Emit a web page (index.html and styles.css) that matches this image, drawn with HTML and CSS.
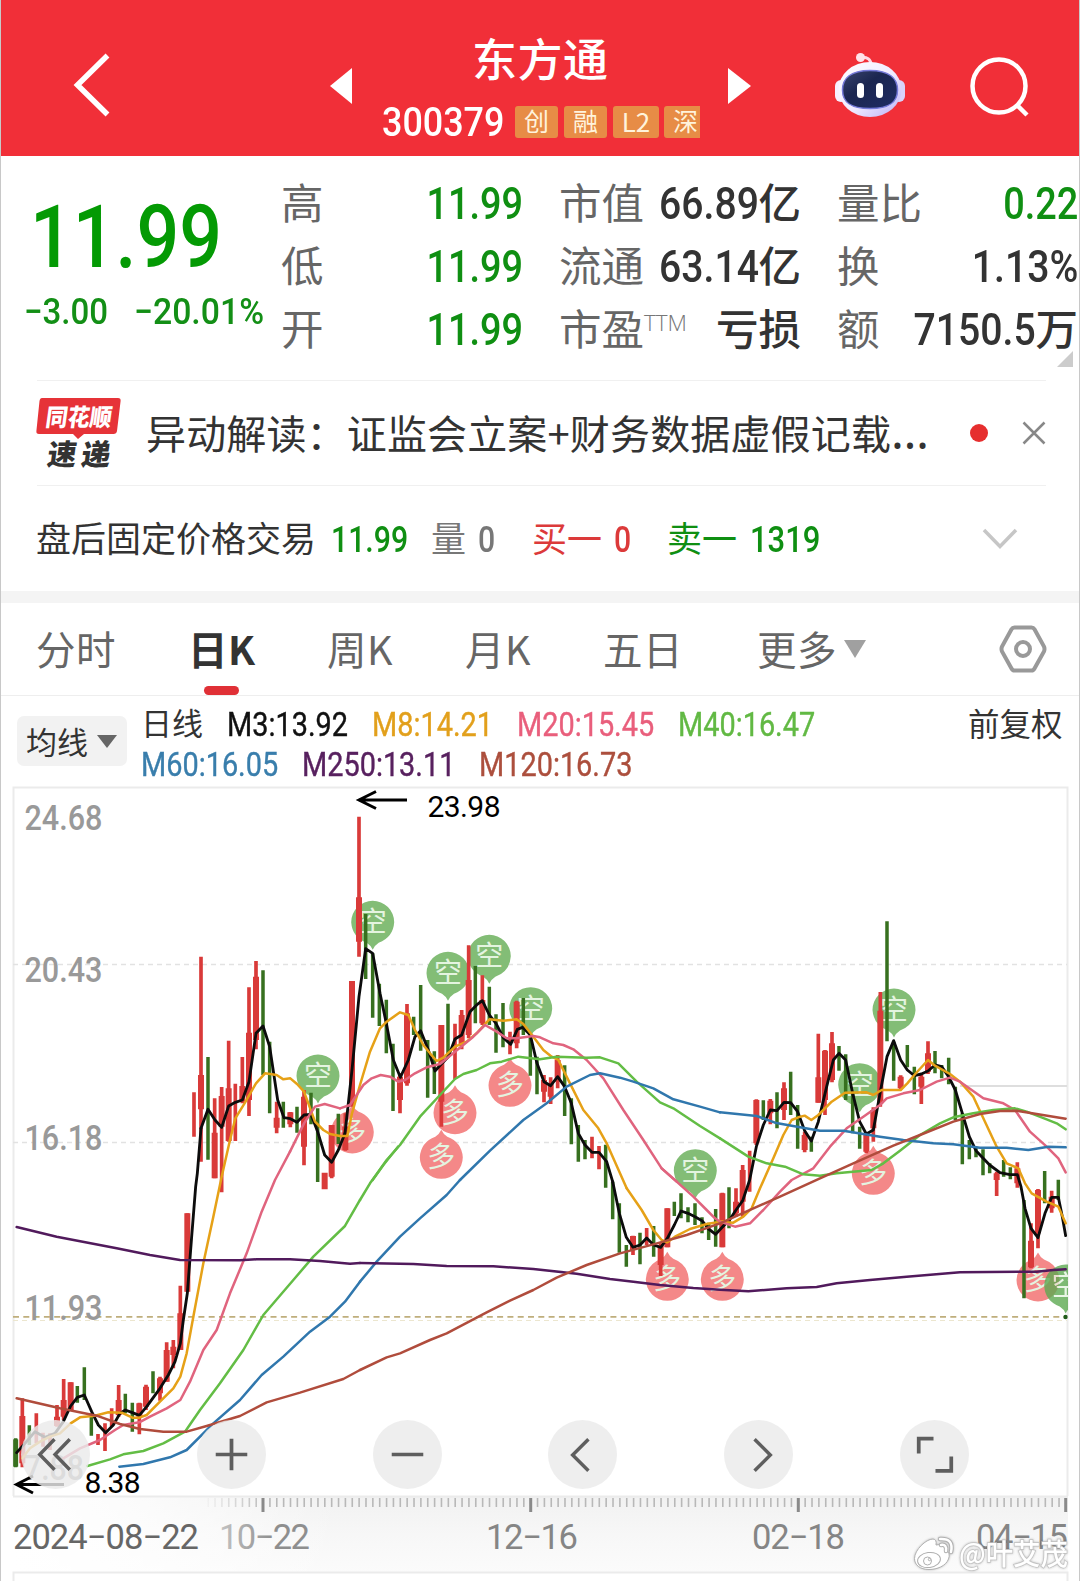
FILE: index.html
```html
<!DOCTYPE html>
<html lang="zh-CN">
<head>
<meta charset="utf-8">
<title>东方通 300379</title>
<link rel="stylesheet" href="styles.css">
</head>
<body>
<div class="app">
  <header class="top">
    <svg class="ic-back" width="40" height="70" viewBox="0 0 40 70"><path d="M35.5 5.500L5.500 35L35.500 64.500"/></svg>
    <svg class="ic-prev" width="22" height="36" viewBox="0 0 22 36"><path d="M22 0V36L0 18Z"/></svg>
    <div class="title">
      <h1>东方通</h1>
      <div class="codes"><span class="code"><b class="n">300379</b></span><i class="tag">创</i><i class="tag">融</i><i class="tag l2">L2</i><i class="tag cut">深</i></div>
    </div>
    <svg class="ic-next" width="23" height="36" viewBox="0 0 23 36"><path d="M0 0V36L23 18Z"/></svg>
    <svg class="ic-bot" width="72" height="68" viewBox="0 0 72 68">
      <defs>
        <linearGradient id="shell" x1="0" y1="0" x2="1" y2="1"><stop offset="0" stop-color="#fff"/><stop offset=".55" stop-color="#f0eaff"/><stop offset="1" stop-color="#b9aef5"/></linearGradient>
        <linearGradient id="visor" x1="0" y1="0" x2="1" y2="1"><stop offset="0" stop-color="#3a456f"/><stop offset=".4" stop-color="#1b2650"/><stop offset="1" stop-color="#202c63"/></linearGradient>
      </defs>
      <path d="M27 6.500Q36 5 37.500 14" fill="none" stroke="#ffd9e6" stroke-width="3"/>
      <circle cx="26.500" cy="6.500" r="4.500" fill="#ffe3ea"/>
      <rect x="1" y="29" width="12" height="22" rx="6" fill="#f7efff"/>
      <rect x="59" y="29" width="12" height="22" rx="6" fill="#d9d2fa"/>
      <ellipse cx="36" cy="38.500" rx="31.500" ry="27.500" fill="url(#shell)"/>
      <path d="M36 19.500C56 19.500 63.500 28 63.500 39C63.500 51 56 57.500 36 57.500C16 57.500 8.500 51 8.500 39C8.500 28 16 19.500 36 19.500Z" fill="url(#visor)" stroke="#7479d8" stroke-width="1.500"/>
      <rect x="23" y="32" width="7" height="15" rx="3.500" fill="#fff"/><rect x="42" y="32" width="7" height="15" rx="3.500" fill="#fff"/>
    </svg>
    <svg class="ic-search" width="62" height="62" viewBox="0 0 62 62"><circle cx="30" cy="30" r="26.500"/><path d="M48 49L58 59"/></svg>
  </header>

  <section class="quote">
    <div class="price">
      <div class="last"><b class="n">11.99</b></div>
      <div class="chg"><span><b class="n">−3.00</b></span><span><b class="n">−20.01%</b></span></div>
    </div>
    <div class="stats">
      <span class="k">高</span><span class="v g"><b class="n">11.99</b></span><span class="k">市值</span><span class="v"><b class="n m">66.89</b>亿</span><span class="k">量比</span><span class="v g"><b class="n s">0.22</b></span>
      <span class="k">低</span><span class="v g"><b class="n">11.99</b></span><span class="k">流通</span><span class="v"><b class="n m">63.14</b>亿</span><span class="k">换</span><span class="v"><b class="n m">1.13%</b></span>
      <span class="k">开</span><span class="v g"><b class="n">11.99</b></span><span class="k">市盈<sup>TTM</sup></span><span class="v">亏损</span><span class="k">额</span><span class="v"><b class="n m">7150.5</b>万</span>
    </div>
    <i class="corner"></i>
  </section>

  <section class="news">
    <svg class="logo" width="86" height="74" viewBox="0 0 86 74">
      <path d="M6 2H82Q85 2 84.600 5L81 35Q80.500 38 77.500 38H48L42 43L37 38H3Q0 38 .400 35L3.500 5Q4 2 6 2Z" fill="#e63338"/>
      <g transform="skewX(-8)" font-weight="900"><text x="13" y="30" font-size="24" fill="#fff" textLength="66" lengthAdjust="spacingAndGlyphs">同花顺</text>
      <text x="20" y="69" font-size="29" fill="#333" textLength="63" lengthAdjust="spacing">速递</text></g>
    </svg>
    <p class="headline">异动解读：证监会立案+财务数据虚假记载<span class="dots">…</span></p>
    <i class="dot"></i>
    <svg class="ic-x" width="24" height="24" viewBox="0 0 24 24"><path d="M1.500 1.500L22.500 22.500M22.500 1.500L1.500 22.500"/></svg>
  </section>

  <section class="after">
    <span class="w1">盘后固定价格交易</span><span class="w2 g"><b class="n">11.99</b></span><span class="w3 grey">量</span><span class="w4 grey"><b class="n">0</b></span><span class="w5 r">买一</span><span class="w6 r"><b class="n">0</b></span><span class="w7 g">卖一</span><span class="w8 g"><b class="n">1319</b></span>
    <svg class="ic-down" width="36" height="22" viewBox="0 0 36 22"><path d="M2 2L18 18.500L34 2"/></svg>
  </section>

  <nav class="tabs">
    <span class="t1">分时</span><span class="t2 on">日K</span><span class="t3">周K</span><span class="t4">月K</span><span class="t5">五日</span><span class="t6">更多<i class="caret"></i></span>
    <svg class="ic-hex" width="48" height="48" viewBox="0 0 48 48"><path d="M15.500 2.500H32.500Q34.500 2.500 35.500 4.200L45 21.500Q46 24 45 26.500L35.500 43.500Q34.500 45.500 32.500 45.500H15.500Q13.500 45.500 12.500 43.500L3 26.500Q2 24 3 21.500L12.500 4.200Q13.500 2.500 15.500 2.500Z"/><circle cx="24" cy="24" r="7"/></svg>
  </nav>

  <section class="legend">
    <div class="ma">均线<i></i></div>
    <div class="rows">
      <div class="row"><span class="d">日线</span><span class="l3"><b class="n">M3:13.92</b></span><span class="l8"><b class="n">M8:14.21</b></span><span class="l20"><b class="n">M20:15.45</b></span><span class="l40"><b class="n">M40:16.47</b></span></div>
      <div class="row"><span class="l60"><b class="n">M60:16.05</b></span><span class="l250"><b class="n">M250:13.11</b></span><span class="l120"><b class="n">M120:16.73</b></span></div>
    </div>
    <div class="adj">前复权</div>
  </section>

  <section class="chart">
    <svg class="plot" width="1080" height="801" viewBox="0 780 1080 801">
      <defs>
        <linearGradient id="ruler" x1="0" y1="0" x2="0" y2="1"><stop offset="0" stop-color="#f1f1f1"/><stop offset=".5" stop-color="#f7f7f7"/><stop offset="1" stop-color="#fbfbfb"/></linearGradient>
        <linearGradient id="fade" x1="0" y1="0" x2="1" y2="0"><stop offset="0" stop-color="#fff"/><stop offset=".35" stop-color="#fff" stop-opacity=".75"/><stop offset="1" stop-color="#fff" stop-opacity="0"/></linearGradient>
        <linearGradient id="date" x1="0" y1="0" x2="1" y2="0"><stop offset="0" stop-color="#c4c4c4"/><stop offset=".6" stop-color="#8e8e8e"/></linearGradient>
        <linearGradient id="tickfade" gradientUnits="userSpaceOnUse" x1="200" y1="0" x2="270" y2="0"><stop offset="0" stop-color="#b8b8b8" stop-opacity="0"/><stop offset="1" stop-color="#b8b8b8"/></linearGradient>
        <clipPath id="frame"><rect x="13" y="787" width="1055" height="709"/></clipPath>
        <g id="short"><path d="M-21.500 0A21.500 21.500 0 1 1 21.500 0Q20.500 15 6 20.500Q2 23 0 27.500Q-2 23 -6 20.500Q-20.500 15 -21.500 0Z"/><text class="glyph" y="10">空</text></g>
        <g id="long"><path d="M-21.500 0A21.500 21.500 0 0 0 21.500 0Q20.500 -15 6 -20.500Q2 -23 0 -27.500Q-2 -23 -6 -20.500Q-20.500 -15 -21.500 0Z"/><text class="glyph" y="10">多</text></g>
      </defs>
      <rect x="13" y="1496" width="1055" height="77" fill="url(#ruler)"/>
      <rect x="13" y="1496" width="330" height="77" fill="url(#fade)"/>
      <path class="frame" d="M13.500 1496V787.500H1067.500V1496M13 1496.500H1068M13.500 1581V1572.500H1067.500V1581"/>
      <path class="grid" d="M13 964.500H1067M13 1142.500H1067"/>
      <path class="hi" d="M960 1086H1067"/>
      <path class="warn" d="M13 1316.800H1067"/><path class="warn2" d="M13 1320.500H1067"/>

      <g class="scale">
        <text x="24.500" y="829.500" textLength="78" lengthAdjust="spacingAndGlyphs">24.68</text><text x="24.500" y="981.700" textLength="78" lengthAdjust="spacingAndGlyphs">20.43</text>
        <text x="24.500" y="1150.300" textLength="78" lengthAdjust="spacingAndGlyphs">16.18</text><text x="24.500" y="1320" textLength="78" lengthAdjust="spacingAndGlyphs">11.93</text>
        <text x="24" y="1479.500" textLength="60" lengthAdjust="spacingAndGlyphs">7.88</text>
      </g>

      <g class="mark" clip-path="url(#frame)">
        <g class="sg"><use href="#short" x="318" y="1076"/><use href="#short" x="372.700" y="922.300"/><use href="#short" x="448" y="973.300"/><use href="#short" x="489.300" y="956.300"/><use href="#short" x="530.700" y="1008.700"/><use href="#short" x="695.300" y="1170.700"/><use href="#short" x="859.700" y="1084.700"/><use href="#short" x="894" y="1010"/></g>
        <g class="lg"><use href="#long" x="352.300" y="1132"/><use href="#long" x="455" y="1112.700"/><use href="#long" x="441.300" y="1157.300"/><use href="#long" x="510" y="1085.300"/><use href="#long" x="667.300" y="1279.300"/><use href="#long" x="722.300" y="1279.300"/><use href="#long" x="873.300" y="1173.300"/><use href="#long" x="1038" y="1280"/></g>
        <g class="sg last"><use href="#short" x="1065.700" y="1286"/></g>
      </g>

      <!-- candles: up wicks, up bodies, down bars -->
      <g transform="translate(0,1150) scale(.33333)">
        <path class="up" d="M67 745V952M109 790V880M129 848V890M150 850V900M171 765V830M191 687V810M212 697V780M294 852V885M315 820V903M335 775V830M356 705V800M418 758V853M438 704V780M480 680V752M500 577V695M520 570V655M541 407V600M562 190V425"/>
        <path class="body" d="M67 798V940M171 800V828M191 750V800M212 697V780M356 750V795M418 760V800M438 710V770M480 685V730M500 600V695M520 590V615M541 490V600M562 190V425"/>
        <path class="dn" d="M47 865V952M88 826V885M232 708V758M253 652V750M274 790V857M376 731V790M397 758V845M459 664V730"/><path class="dnb" d="M47 868V950"/>
      </g>
      <g transform="translate(0,780) scale(.33333)">
        <path class="up" d="M582 937V1070M603 530V1145M644 955V1195M665 921V1237M686 782V1085M706 911V1083M727 831V970M747 622V1008M768 543V808M830 965V1060M871 996V1042M912 930V1156M995 1035V1195M1036 1000V1112"/>
        <path class="body" d="M603 885V988M644 1058V1195M665 948V1040M686 925V1083M727 918V965M747 758V960M768 590V780M830 1013V1043M871 997V1033M912 950V1100M974 1178V1228M995 1035V1190M1036 1040V1110M1056 603V980"/>
        <path class="dn" d="M624 831V1139M789 571V885M809 785V1000M850 965V1043M891 980V1058M933 938V1033M953 985V1206M1015 1001V1092"/>
      </g>
      <g transform="translate(340,780) scale(.33333)">
        <path class="up" d="M57 110V530M180 880V1000M201 672V917M304 735V1040M345 731V897M365 690V808M386 496V775M427 586V735M510 755V823M530 662V805M612 885V967M632 892V972M653 825V925M756 1070V1135M777 1098V1168"/>
        <path class="body" d="M57 352V485M180 890V960M201 700V910M304 735V965M365 705V795M386 600V765M427 660V730M530 665V790M612 900V935M632 910V950M653 840V905"/>
        <path class="dn" d="M77 402V597M98 520V713M118 611V738M139 659V820M159 791V993M221 710V765M242 615V812M263 780V953M283 814V942M324 671V830M406 558V730M448 620V735M468 703V818M489 669V802M550 654V765M571 760V887M591 830V943M674 856V1008M694 955V1093M715 1035V1145M735 1080V1138M797 1094V1223"/>
      </g>
      <g transform="translate(360,1150) scale(.33333)">
        <path class="up" d="M819 257V315M860 234V285M902 280V378M922 175V292"/>
        <path class="body" d="M819 258V300M902 285V345M922 175V292"/>
        <path class="dn" d="M758 95V208M778 160V308M799 285V350M840 248V343M881 228V320M943 155V198M963 130V205M984 172V217M1005 160V225M1026 202V250M1046 218V270M1067 177V290"/>
      </g>
      <g transform="translate(720,880) scale(.33333)">
        <path class="up" d="M7 938V1102M48 925V1010M68 855V1010M89 812V935M109 658V795M151 657V733M192 607V720M254 755V817M295 461V668M315 510V705M336 456V607M439 760V820M460 682V785M481 336V680M542 586V628M604 580V672M624 484V582M830 875V948M892 847V923M933 1030V1165M954 927V1105M995 932V998"/>
        <path class="body" d="M7 940V1102M48 965V1000M68 870V965M109 660V790M151 662V700M192 625V690M254 765V810M295 592V668M315 512V660M336 490V600M439 762V815M460 690V745M481 392V670M542 590V625M604 590V620M624 520V575M830 880V900M892 865V910M933 1082V1162M954 930V1060M995 950V985"/>
        <path class="dn" d="M27 922V1045M130 661V720M171 637V745M212 575V705M233 675V806M274 770V815M357 498V572M377 523V660M398 640V760M419 740V806M501 124V484M521 485V602M562 495V562M583 560V643M645 513V580M665 555V595M686 533V613M706 620V720M727 700V853M748 780V838M768 800V832M789 808V886M809 850V880M851 840V890M871 862V898M912 960V1255M974 873V970M1015 899V960"/>
      </g>
      <circle cx="1065.500" cy="1317" r="2.200" fill="#1f5a1a"/>

      <!-- moving averages -->
      <g transform="translate(0,1150) scale(.33333)" class="ln">
        <path class="c3" d="M50 908L75 880L105 845L135 862L165 850L190 815L212 768L232 742L253 735L275 785L295 825L317 848L340 825L360 790L376 780L397 788L418 796L440 770L480 715L505 675L525 635L541 580L550 510L562 430L575 260L587 110L592 70L603 -65"/>
        <path class="c8" d="M67 925L90 895L120 875L150 860L180 850L212 820L240 802L285 797L325 787L365 788L397 803L418 803L440 795L480 755L520 715L541 680L560 610L580 500L610 340L640 200L665 80L690 -30"/>
        <path class="c20" d="M190 925L240 895L300 870L345 840L370 825L418 817L450 800L500 775L541 750L570 695L610 600L650 540L690 430L740 310L785 185L825 90L870 5"/>
        <path class="c40" d="M262 948L330 928L370 913L430 903L490 880L555 845L600 780L660 700L730 600L790 495L880 390L940 320L1035 228L1080 150"/>
        <path class="c60" d="M358 950L430 942L510 922L560 900L640 820L720 750L785 675L850 620L930 545L990 500L1035 455L1080 395"/>
        <path class="c250" d="M50 231L170 260L350 295L450 315L540 330L720 331L770 328L870 328L960 333L1050 341L1080 339"/>
        <path class="c120" d="M50 745L180 775L290 797L360 822L420 837L490 845L560 845L620 828L720 798L800 757L900 728L1030 687L1080 660"/>
      </g>
      <g transform="translate(0,780) scale(.33333)" class="ln">
        <path class="c3" d="M603 1045L624 988L645 1020L665 1042L686 978L706 967L727 960L747 905L768 760L789 738L809 800L833 960L852 1013L871 1016L891 1027L912 1005L933 1003L953 1055L974 1125L995 1147L1015 1110L1035 1060"/>
        <path class="c8" d="M690 1080L706 1015L735 968L768 910L795 880L830 885L850 898L871 895L891 912L912 935L925 970L945 1025L970 1050L990 1062L1020 1068"/>
        <path class="c20" d="M870 1115L912 1030L945 980L974 972L1020 985"/>
      </g>
      <g transform="translate(340,780) scale(.33333)" class="ln">
        <path class="c3" d="M15 1060L36 870L57 650L77 506L98 520L120 640L140 735L160 840L181 892L205 840L225 770L242 752L265 810L285 873L304 852L325 830L345 777L365 765L390 695L410 675L427 662L448 705L468 730L490 773L512 793L532 748L548 742L571 765L591 850L612 905L632 917L653 890L674 920L694 970L715 1060L735 1095L756 1117L777 1117L800 1145L818 1205"/>
        <path class="c8" d="M0 1068L22 1068L36 1000L60 915L90 815L120 745L140 725L180 697L205 705L225 750L250 795L270 820L290 843L310 833L345 800L380 785L410 760L448 718L490 722L530 718L550 732L580 770L610 810L635 830L655 840L690 910L730 990L775 1045L800 1090L860 1225"/>
        <path class="c20" d="M0 985L30 975L70 915L95 895L122 885L150 890L175 905L195 900L225 880L260 862L300 852L345 815L400 770L435 735L470 755L500 775L530 775L580 768L600 772L640 790L670 795L700 808L740 840L790 895L850 990L910 1080L965 1165L1010 1205"/>
        <path class="c40" d="M98 1200L140 1140L180 1095L240 1010L300 945L345 897L370 882L410 870L450 850L485 845L535 830L600 838L650 830L740 833L780 832L835 850L890 905L960 967L1000 985L1080 1038L1140 1075"/>
        <path class="c60" d="M360 1200L450 1112L550 1020L620 970L680 920L750 885L780 880L840 893L880 905L940 925L1000 958L1080 980L1140 997"/>
      </g>
      <g transform="translate(360,1150) scale(.33333)" class="ln">
        <path class="c3" d="M758 95L778 190L799 262L819 292L840 285L860 264L881 285L902 292L922 265L943 225L963 183L984 190L1005 200L1026 212L1046 237L1067 253L1090 228"/>
        <path class="c8" d="M800 115L845 180L880 240L905 270L922 277L945 260L990 237L1040 222L1090 214"/>
        <path class="c20" d="M905 55L950 95L1000 140L1040 180L1065 205L1080 215"/>
        <path class="c40" d="M0 150L30 100L70 45L114 -10"/>
        <path class="c60" d="M0 395L50 335L120 260L180 205L260 135L300 90"/>
        <path class="c250" d="M0 339L160 342L260 348L400 349L520 357L650 371L750 387L820 395L900 405L1000 414L1080 419L1165 424L1280 415L1370 411L1430 400L1530 390L1640 380L1800 367L2030 365L2080 360L2117 358"/>
        <path class="c120" d="M0 660L80 622L120 610L210 570L260 550L380 487L450 452L520 420L590 383L680 345L780 310L880 283L980 255L1080 220"/>
      </g>
      <g transform="translate(720,880) scale(.33333)" class="ln">
        <path class="c3" d="M10 1038L27 1022L48 990L68 962L89 900L109 800L130 735L151 690L171 692L192 667L212 668L233 695L254 752L274 783L295 725L320 620L340 540L357 520L377 540L398 640L419 725L439 762L460 750L481 635L501 530L521 482L542 540L562 570L583 587L604 582L624 573L645 555L665 560L686 590L706 630L727 700L748 770L768 812L809 855L840 878L870 884L892 884L903 920L915 985L933 1045L954 1073L975 1000L995 952L1015 952L1027 1010L1037 1067"/>
        <path class="c8" d="M0 1025L40 1028L70 1010L95 985L120 925L160 835L190 765L215 720L235 712L254 707L274 720L295 705L335 665L375 638L440 637L460 645L485 630L542 630L562 610L583 585L624 540L645 557L690 582L720 605L760 650L790 715L830 800L860 850L895 865L915 910L935 940L980 965L1015 980L1037 1030"/>
        <path class="c20" d="M0 1025L45 1040L90 1030L130 990L180 935L215 900L280 865L330 800L380 745L430 710L480 675L500 655L550 640L600 630L650 605L690 593L720 605L790 655L850 670L885 690L930 755L980 800L1015 835L1037 877"/>
        <path class="c40" d="M0 775L85 830L140 850L195 860L250 883L300 887L350 880L455 870L490 850L540 812L600 765L660 730L700 712L760 700L820 690L885 685L920 695L980 718L1010 730L1037 748"/>
        <path class="c60" d="M0 697L110 708L165 728L240 742L300 752L370 752L430 762L480 770L550 780L640 790L700 793L780 803L860 803L925 810L985 800L1037 802"/>
        <path class="c120" d="M0 1030L60 1003L180 950L300 895L400 850L520 797L600 765L700 725L780 702L840 693L890 692L950 702L1037 716"/>
      </g>

      <g class="ext"><path d="M407 800H360M376 791.500L359 800L376 808.500M64 1484.500H18M33 1476L16.500 1484.500L33 1493"/>
        <text x="427.500" y="817" textLength="73">23.98</text><text x="84.500" y="1493" textLength="56">8.38</text></g>

      <path class="ticks" d="M202 1502.500L1066 1502.600"/>
      <path class="major" d="M263 1498V1512M530.700 1498V1512M798.300 1498V1512M1065.700 1498V1512"/>
      <g class="dates"><text x="13" y="1548.700" textLength="186" fill="#666">2024−08−22</text><text x="219" y="1548.700" textLength="91" fill="url(#date)">10−22</text><text x="486" y="1548.700" textLength="92">12−16</text><text x="752" y="1548.700" textLength="93">02−18</text><text x="976" y="1548.700" textLength="92">04−15</text></g>

      <g class="wm">
        <path d="M914.500 1558.500C914.500 1550 926 1539 933 1539Q937 1539.500 936 1545Q947 1542.500 945.500 1550Q951 1553 948.500 1559C946 1566 937 1569.500 929 1569.500C920 1569.500 914.500 1565 914.500 1558.500Z"/>
        <ellipse cx="929" cy="1560" rx="11.500" ry="7.500" transform="rotate(-8 929 1560)"/><circle class="eye" cx="927.500" cy="1561" r="4"/><circle cx="929.500" cy="1559.500" r="1.200"/>
        <path class="wave o" d="M941 1545Q947 1544 946 1551M940 1539Q954 1538 951 1552"/><path class="wave" d="M941 1545Q947 1544 946 1551M940 1539Q954 1538 951 1552"/>
        <text x="959" y="1565" textLength="109" lengthAdjust="spacingAndGlyphs">@叶艾茂</text>
      </g>
    </svg>
    <div class="tools">
      <span><svg viewBox="0 0 70 70"><path d="M34 19.500L19 35L34 50.500M49.500 19.500L34.500 35L49.500 50.500"/></svg></span>
      <span><svg viewBox="0 0 70 70"><path class="b" d="M35 19V51M19 35H51"/></svg></span>
      <span><svg viewBox="0 0 70 70"><path class="b" d="M19 35H51"/></svg></span>
      <span><svg viewBox="0 0 70 70"><path d="M41 19.500L25 35.500L41 51.500"/></svg></span>
      <span><svg viewBox="0 0 70 70"><path d="M31 19.500L47 35.500L31 51.500"/></svg></span>
      <span><svg viewBox="0 0 70 70"><path class="b" d="M19 34V19H34M52 37V51.500H36"/></svg></span>
    </div>
  </section>
</div>
</body>
</html>
```
FILE: styles.css
```css
* { box-sizing: border-box; }
body { margin: 0; background: #fff; font-family: "Noto Sans CJK SC", sans-serif; color: #333; }
i { font-style: normal; }
.app { width: 1080px; height: 1581px; display: flex; flex-direction: column; overflow: hidden; border-left: 1px solid #c8c8c8; border-right: 1px solid #c8c8c8; }
.app > * { margin-left: -1px; width: 1080px; flex: none; }
svg { flex: none; display: block; overflow: visible; }
.n { font-family: Roboto, sans-serif; font-weight: 500; display: inline-block; transform: scaleX(.93); transform-origin: left; white-space: nowrap; }
.g { color: #0f8f12; }
.r { color: #dc3a3a; }
.grey { color: #777; }

.top { height: 156px; background: #f12f38; display: flex; align-items: flex-start; color: #fff; border-left: 1px solid #c8323a; }
.ic-back { margin: 50px 0 0 71px; fill: none; stroke: #fff; stroke-width: 5.500; }
.ic-prev { margin: 68px 0 0 218px; fill: #fff; }
.title { width: 376px; height: 156px; padding-top: 33px; overflow: hidden; }
.title h1 { margin: 0 0 0 120px; font-size: 45px; line-height: 50px; font-weight: 500; letter-spacing: .500px; }
.codes { display: flex; gap: 6px; margin-top: 23px; padding-left: 30px; }
.code { width: 127px; font-size: 41.500px; line-height: 32px; height: 32px; margin-top: -4px; }
.code .n { transform: scaleX(.865); }
.tag { width: 43px; height: 32px; border-radius: 3px; background: #e78c46; color: #fff3dc; font-size: 25px; line-height: 29px; text-align: center; }
.tag.l2 { width: 46px; margin-right: -1px; font-size: 26px; }
.tag.cut { width: 36px; border-radius: 3px 0 0 3px; text-align: right; padding-right: 2px; }
.ic-next { margin: 68px 0 0 0; fill: #fff; }
.ic-bot { margin: 51px 0 0 83px; }
.ic-search { margin: 56px 0 0 63px; fill: none; stroke: #fff; stroke-width: 4.500; }

.quote { height: 224px; display: flex; position: relative; }
.price { width: 281px; padding-top: 30px; color: #049a04; }
.last { font-size: 87px; line-height: 86px; padding-left: 30px; }
.last .n { transform: scaleX(.865); }
.chg { display: flex; font-size: 36.500px; line-height: 40px; padding-left: 24px; margin-top: 9px; color: #138f16; }
.chg span:first-child { width: 110px; }
.chg .n { transform: scaleX(.905); }
.chg span:last-child .n { transform: scaleX(.925); }
.stats { display: grid; grid-template-columns: 60px 182px 140px 138px 99px 178px; grid-auto-rows: 63px; width: 797px; padding-top: 13px; font-size: 42.500px; line-height: 63px; }
.stats .k { color: #666; white-space: nowrap; }
.stats .k:nth-child(6n+3) { padding-left: 36px; }
.stats .k:nth-child(6n+5) { padding-left: 36px; }
.stats .v { text-align: right; font-weight: 500; white-space: nowrap; display: flex; justify-content: flex-end; }
.stats .v .n { font-size: 43.500px; transform: scaleX(.87); transform-origin: right; padding-top: 4px; }
.stats .v .n.m { transform: scaleX(.9); }
.stats .v .n.s { transform: scaleX(.87); }
.stats sup { font-family: "Open Sans", sans-serif; font-weight: 300; font-size: 22.500px; line-height: 0; vertical-align: 14px; color: #777; }
.corner { position: absolute; right: 7px; bottom: 13px; border: 8.500px solid transparent; border-right-color: #ccc; border-bottom-color: #ccc; }

.news { height: 106px; width: 1009px !important; margin-left: 36px !important; border-top: 1.500px solid #f0f0f0; border-bottom: 1.500px solid #f0f0f0; display: flex; align-items: center; }
.logo { margin: -1px 0 0 -1px; }
.headline { margin: -2px 0 0 24px; width: 788px; font-size: 40px; letter-spacing: .150px; line-height: 60px; white-space: nowrap; }
.dots { font-family: "Noto Sans", sans-serif; font-size: 48px; line-height: 0; }
.dot { width: 18px; height: 18px; border-radius: 50%; background: #e62e2e; margin-left: 37px; }
.ic-x { margin-left: 34px; stroke: #888; stroke-width: 2.500; }

.after { height: 117px; display: flex; align-items: center; padding: 0 62px 0 36px; font-size: 35px; border-bottom: 12px solid #f4f4f4; }
.after span { white-space: nowrap; line-height: 40px; height: 44px; }
.after .n { font-size: 36px; transform: scaleX(.84); padding-top: 1px; }
.w1 { width: 295px; } .w2 { width: 100px; } .w3 { width: 47px; } .w4 { width: 54px; } .w5 { width: 82px; } .w6 { width: 53px; } .w7 { width: 83px; } .w8 { width: 232px; }
.after .w8 .n { transform: scaleX(.86); }
.ic-down { fill: none; stroke: #c6c6c6; stroke-width: 3.500; }

.tabs { height: 93px; display: flex; align-items: center; padding-left: 36px; border-bottom: 1.500px solid #eee; font-size: 39.500px; letter-spacing: .600px; color: #666; }
.tabs span { position: relative; line-height: 60px; white-space: nowrap; display: flex; align-items: center; margin-top: -3px; }
.t1 { width: 152px; } .t2 { width: 139px; } .t3 { width: 138px; } .t4 { width: 138px; } .t5 { width: 154px; } .t6 { width: 242px; }
.tabs .on { color: #333; font-weight: 700; }
.tabs .on::after { content: ""; position: absolute; left: 16px; bottom: -17px; width: 35px; height: 9px; border-radius: 5px; background: #e03036; }
.caret { border: 11px solid transparent; border-top: 18px solid #a0a0a0; border-bottom: 0; margin: 2px 0 0 7px; }
.ic-hex { fill: none; stroke: #999; stroke-width: 4; }

.legend { height: 84px; display: flex; padding-left: 17px; }
.ma { width: 110px; height: 50px; margin-top: 20px; border-radius: 7px; background: #f2f2f2; font-size: 31px; line-height: 46px; padding-left: 9px; display: flex; align-items: center; }
.ma i { border: 10px solid transparent; border-top: 13px solid #666; border-bottom: 0; margin-left: 9px; }
.rows { padding: 7px 0 0 14px; width: 842px; }
.row { display: flex; height: 39.500px; line-height: 39px; font-size: 31px; }
.row span { white-space: nowrap; }
.row .d { width: 86px; line-height: 38px; }
.row .n { font-size: 33px; font-weight: 400; -webkit-text-stroke: .400px; transform: scaleX(.875); }
.l3 { width: 145px; color: #111; } .l8 { width: 145px; color: #e2a01c; } .l20 { width: 161px; color: #e95f7c; } .l40 { width: 150px; color: #62b944; }
.l60 { width: 161px; color: #397eac; } .l250 { width: 177px; color: #58215f; } .l120 { color: #ac4f3d; }
.adj { font-size: 31.500px; line-height: 36px; padding-top: 8px; margin-left: -1px; white-space: nowrap; }

.chart { position: relative; height: 801px; }
.frame { fill: none; stroke: #ebebeb; stroke-width: 2; }
.grid { stroke: #e2e2e2; stroke-width: 1.300; stroke-dasharray: 5 4; }
.hi { stroke: #dedede; stroke-width: 2; }
.warn { stroke: #bfae7c; stroke-width: 1.800; stroke-dasharray: 6 4.300; }
.warn2 { stroke: #ece6cf; stroke-width: 1.200; stroke-dasharray: 5 4; }
.scale text, .dates text, .ext text { font-family: Roboto, sans-serif; }
.scale text { font-size: 35.500px; font-weight: 500; fill: #999; }
.dates text { font-size: 34.500px; font-weight: 400; }
.dates { fill: #858585; }
.ext text { font-size: 30px; fill: #000; }
.ext path { fill: none; stroke: #000; stroke-width: 3; }
.glyph { font-size: 28px; font-weight: 400; fill: #e4f4e0; text-anchor: middle; }
.sg { fill: #83bd76; } .lg { fill: #f48888; }
.sg.last { opacity: .8; fill: #5da952; }
.up, .body, .dn, .dnb { fill: none; }
.up { stroke: #d93a39; stroke-width: 11; } .body { stroke: #d93a39; stroke-width: 18; } .dn { stroke: #37701f; stroke-width: 10.500; } .dnb { stroke: #37701f; stroke-width: 15; }
.ln path { fill: none; stroke-width: 7.500; stroke-linejoin: round; stroke-linecap: round; }
.ln .c3 { stroke: #0c0c0c; stroke-width: 8.500; } .ln .c8 { stroke: #e6a117; } .ln .c20 { stroke: #e0647e; } .ln .c40 { stroke: #63bd45; }
.ln .c60 { stroke: #3077ad; } .ln .c250 { stroke: #511a5c; } .ln .c120 { stroke: #b04c3c; }
.ticks { stroke: url(#tickfade); stroke-width: 9; stroke-dasharray: 1.600 5.262; stroke-dashoffset: 1.500; }
.major { stroke: #8a8a8a; stroke-width: 3; }
.wm { fill: #fff; stroke: #b0b0b0; stroke-width: 1; filter: drop-shadow(0 0 1px rgba(0, 0, 0, .25)); }
.wm text { font-size: 29px; paint-order: stroke; stroke: #c2c2c2; stroke-width: 1.500px; font-weight: 500; }
.wm .eye { fill: #fff; }
.wm .wave { fill: none; stroke: #fff; stroke-width: 2.500; stroke-linecap: round; }
.wm .wave.o { stroke: #b0b0b0; stroke-width: 4.500; }
.tools { position: absolute; left: 21px; top: 640px; width: 948px; display: flex; justify-content: space-between; }
.tools span { width: 69px; height: 69px; border-radius: 50%; background: rgba(234, 234, 234, .82); }
.tools path { fill: none; stroke: #5e5e5e; stroke-width: 3.500; }
.tools .b { stroke-width: 3.800; }
```
